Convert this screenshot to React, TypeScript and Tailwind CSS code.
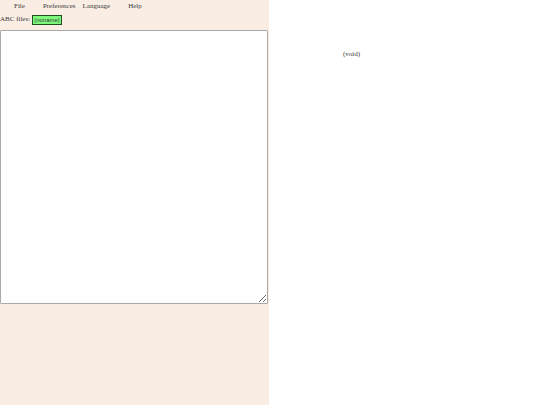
import React from "react";

export default function App() {
  return (
    <div className="flex w-[540px] h-[405px] bg-white" style={{ fontFamily: '"Liberation Serif", serif' }}>
      <div className="w-[269px] h-full bg-[#faeee4] flex flex-col text-[7px] text-[#3a3a3a]">
        <div className="flex h-[12px] items-center leading-none">
          <span className="ml-[14px]">File</span>
          <span className="ml-[18px]">Preferences</span>
          <span className="ml-[7px]">Language</span>
          <span className="ml-[18px]">Help</span>
        </div>
        <div className="flex items-center h-[13px] mt-[1px] leading-none">
          <span>ABC files:</span>
          <span
            className="ml-[2px] h-[10px] px-[1px] flex items-center bg-[#7cf97c] border border-[#1f4f1f] text-[6px]"
            style={{ fontFamily: '"Liberation Sans", sans-serif' }}
          >
            (noname)
          </span>
        </div>
        <textarea className="mt-[4px] w-[268px] h-[274px] bg-white border border-[#a8a8a8] rounded-[1px] resize" />
      </div>
      <div className="flex-1 pt-[51px] pl-[74px] text-[7px] leading-none text-[#3a3a3a]">
        <span>(void)</span>
      </div>
    </div>
  );
}
